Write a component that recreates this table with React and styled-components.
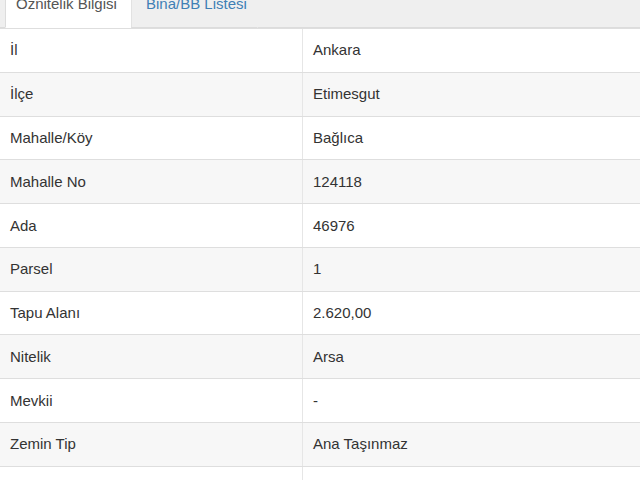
import React from "react";
import styled, { createGlobalStyle } from "styled-components";

const Global = createGlobalStyle`
  html, body { margin: 0; padding: 0; background: #fff; overflow: hidden; }
  body { font-family: "Liberation Sans", Arial, sans-serif; font-size: 15px; color: #333; }
`;

const Page = styled.div`
  margin-top: -18px;
`;

const TabBar = styled.ul`
  display: flex;
  list-style: none;
  margin: 0;
  padding: 0 0 0 5px;
  background: #efefef;
  border-bottom: 1px solid #dcdcdc;
`;

const Tab = styled.li`
  margin-bottom: -1px;
  padding: 11px 10px 13px 10px;
  line-height: 20px;
  width: 127px;
  box-sizing: border-box;
  white-space: nowrap;
  border: 1px solid ${(p) => (p.$active ? "#dcdcdc" : "#e2e2e2")};
  border-right-color: ${(p) => (p.$active ? "#dcdcdc" : "#efefef")};
  border-bottom-color: ${(p) => (p.$active ? "#fff" : "#dcdcdc")};
  background: ${(p) => (p.$active ? "#fff" : "#efefef")};
  color: ${(p) => (p.$active ? "#555" : "#3f7fb5")};
  & + & { margin-left: -1px; padding-left: 14px; }
`;

const Table = styled.table`
  width: 100%;
  border-collapse: collapse;
`;

const Row = styled.tr`
  background: ${(p) => (p.$striped ? "#f7f7f7" : "#fff")};
`;

const Cell = styled.td`
  padding: 11.4px 10px 11.4px 10px;
  line-height: 20px;
  border-top: 1px solid #dedede;
  border-bottom: 1px solid #dedede;
  & + & { border-left: 1px solid #e6e6e6; }
  &:first-child { width: 282px; }
`;

const rows = [
  ["İl", "Ankara"],
  ["İlçe", "Etimesgut"],
  ["Mahalle/Köy", "Bağlıca"],
  ["Mahalle No", "124118"],
  ["Ada", "46976"],
  ["Parsel", "1"],
  ["Tapu Alanı", "2.620,00"],
  ["Nitelik", "Arsa"],
  ["Mevkii", "-"],
  ["Zemin Tip", "Ana Taşınmaz"],
  ["Blok", ""],
];

export default function App() {
  return (
    <Page>
      <Global />
      <TabBar>
        <Tab $active>Öznitelik Bilgisi</Tab>
        <Tab>Bina/BB Listesi</Tab>
      </TabBar>
      <Table>
        <tbody>
          {rows.map(([k, v], i) => (
            <Row key={k} $striped={i % 2 === 1}>
              <Cell>{k}</Cell>
              <Cell>{v}</Cell>
            </Row>
          ))}
        </tbody>
      </Table>
    </Page>
  );
}
